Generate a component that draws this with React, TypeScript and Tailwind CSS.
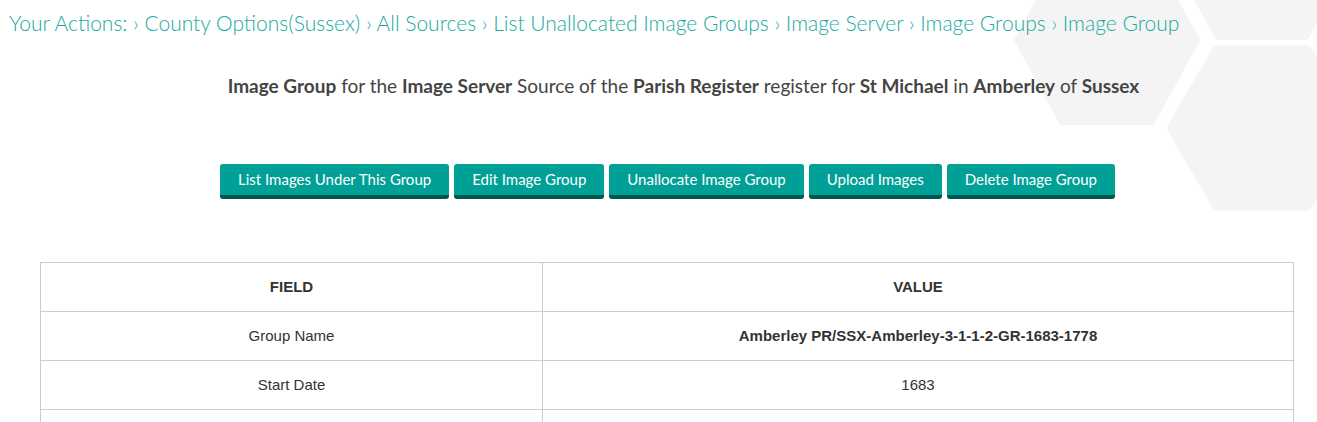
import React from "react";

const hex = (cx: number, cy: number, w: number, h: number) => {
  const a = w / 2, q = w / 4, b = h / 2;
  return `${cx - a},${cy} ${cx - q},${cy - b} ${cx + q},${cy - b} ${cx + a},${cy} ${cx + q},${cy + b} ${cx - q},${cy + b}`;
};

export default function App() {
  const crumbs = ["County Options(Sussex)", "All Sources", "List Unallocated Image Groups", "Image Server", "Image Groups", "Image Group"];
  const buttons = ["List Images Under This Group", "Edit Image Group", "Unallocate Image Group", "Upload Images", "Delete Image Group"];
  return (
    <div className="relative w-[1317px] h-[422px] overflow-hidden bg-white" style={{ fontFamily: "Lato, 'Open Sans', sans-serif" }}>
      <svg className="absolute left-0 top-0" width="1317" height="422">
        <g fill="#f4f4f4" stroke="#f4f4f4" strokeWidth="10" strokeLinejoin="round">
          <polygon points={hex(1107, 40, 175, 160)} />
          <polygon points={hex(1262, 128, 180, 155)} />
          <polygon points={hex(1262, -40, 170, 150)} />
          <polygon points={hex(1420, 215, 180, 155)} />
        </g>
      </svg>
      <div className="relative">
        <div className="pt-[9px] pl-[9px] text-[21px] leading-[28px] font-light text-[#17aaa2]">
          Your Actions:
          {crumbs.map((c) => (
            <span key={c}> › {c}</span>
          ))}
        </div>
        <div className="mt-[36px] text-center text-[19px] leading-[26px] text-[#444] pl-[50px]">
          <b>Image Group</b> for the <b>Image Server</b> Source of the <b>Parish Register</b> register for <b>St Michael</b> in <b>Amberley</b> of <b>Sussex</b>
        </div>
        <div className="mt-[65px] flex justify-center gap-[5px] pl-[18px]">
          {buttons.map((b) => (
            <div key={b} className="h-[35px] px-[18px] flex items-center bg-[#00a096] border-b-[4px] border-[#00564f] rounded-[3px] text-white text-[15px]">
              {b}
            </div>
          ))}
        </div>
        <table className="mt-[63px] ml-[40px] w-[1254px] border-collapse text-[15px] text-[#333]" style={{ fontFamily: "'Liberation Sans', Arial, sans-serif" }}>
          <tbody>
            <tr className="h-[49px]">
              <th className="w-[502px] border border-[#ccc] font-bold">FIELD</th>
              <th className="border border-[#ccc] font-bold">VALUE</th>
            </tr>
            <tr className="h-[49px]">
              <td className="border border-[#ccc] text-center">Group Name</td>
              <td className="border border-[#ccc] text-center font-bold">Amberley PR/SSX-Amberley-3-1-1-2-GR-1683-1778</td>
            </tr>
            <tr className="h-[49px]">
              <td className="border border-[#ccc] text-center">Start Date</td>
              <td className="border border-[#ccc] text-center">1683</td>
            </tr>
            <tr className="h-[49px]">
              <td className="border border-[#ccc]"></td>
              <td className="border border-[#ccc]"></td>
            </tr>
          </tbody>
        </table>
      </div>
    </div>
  );
}
